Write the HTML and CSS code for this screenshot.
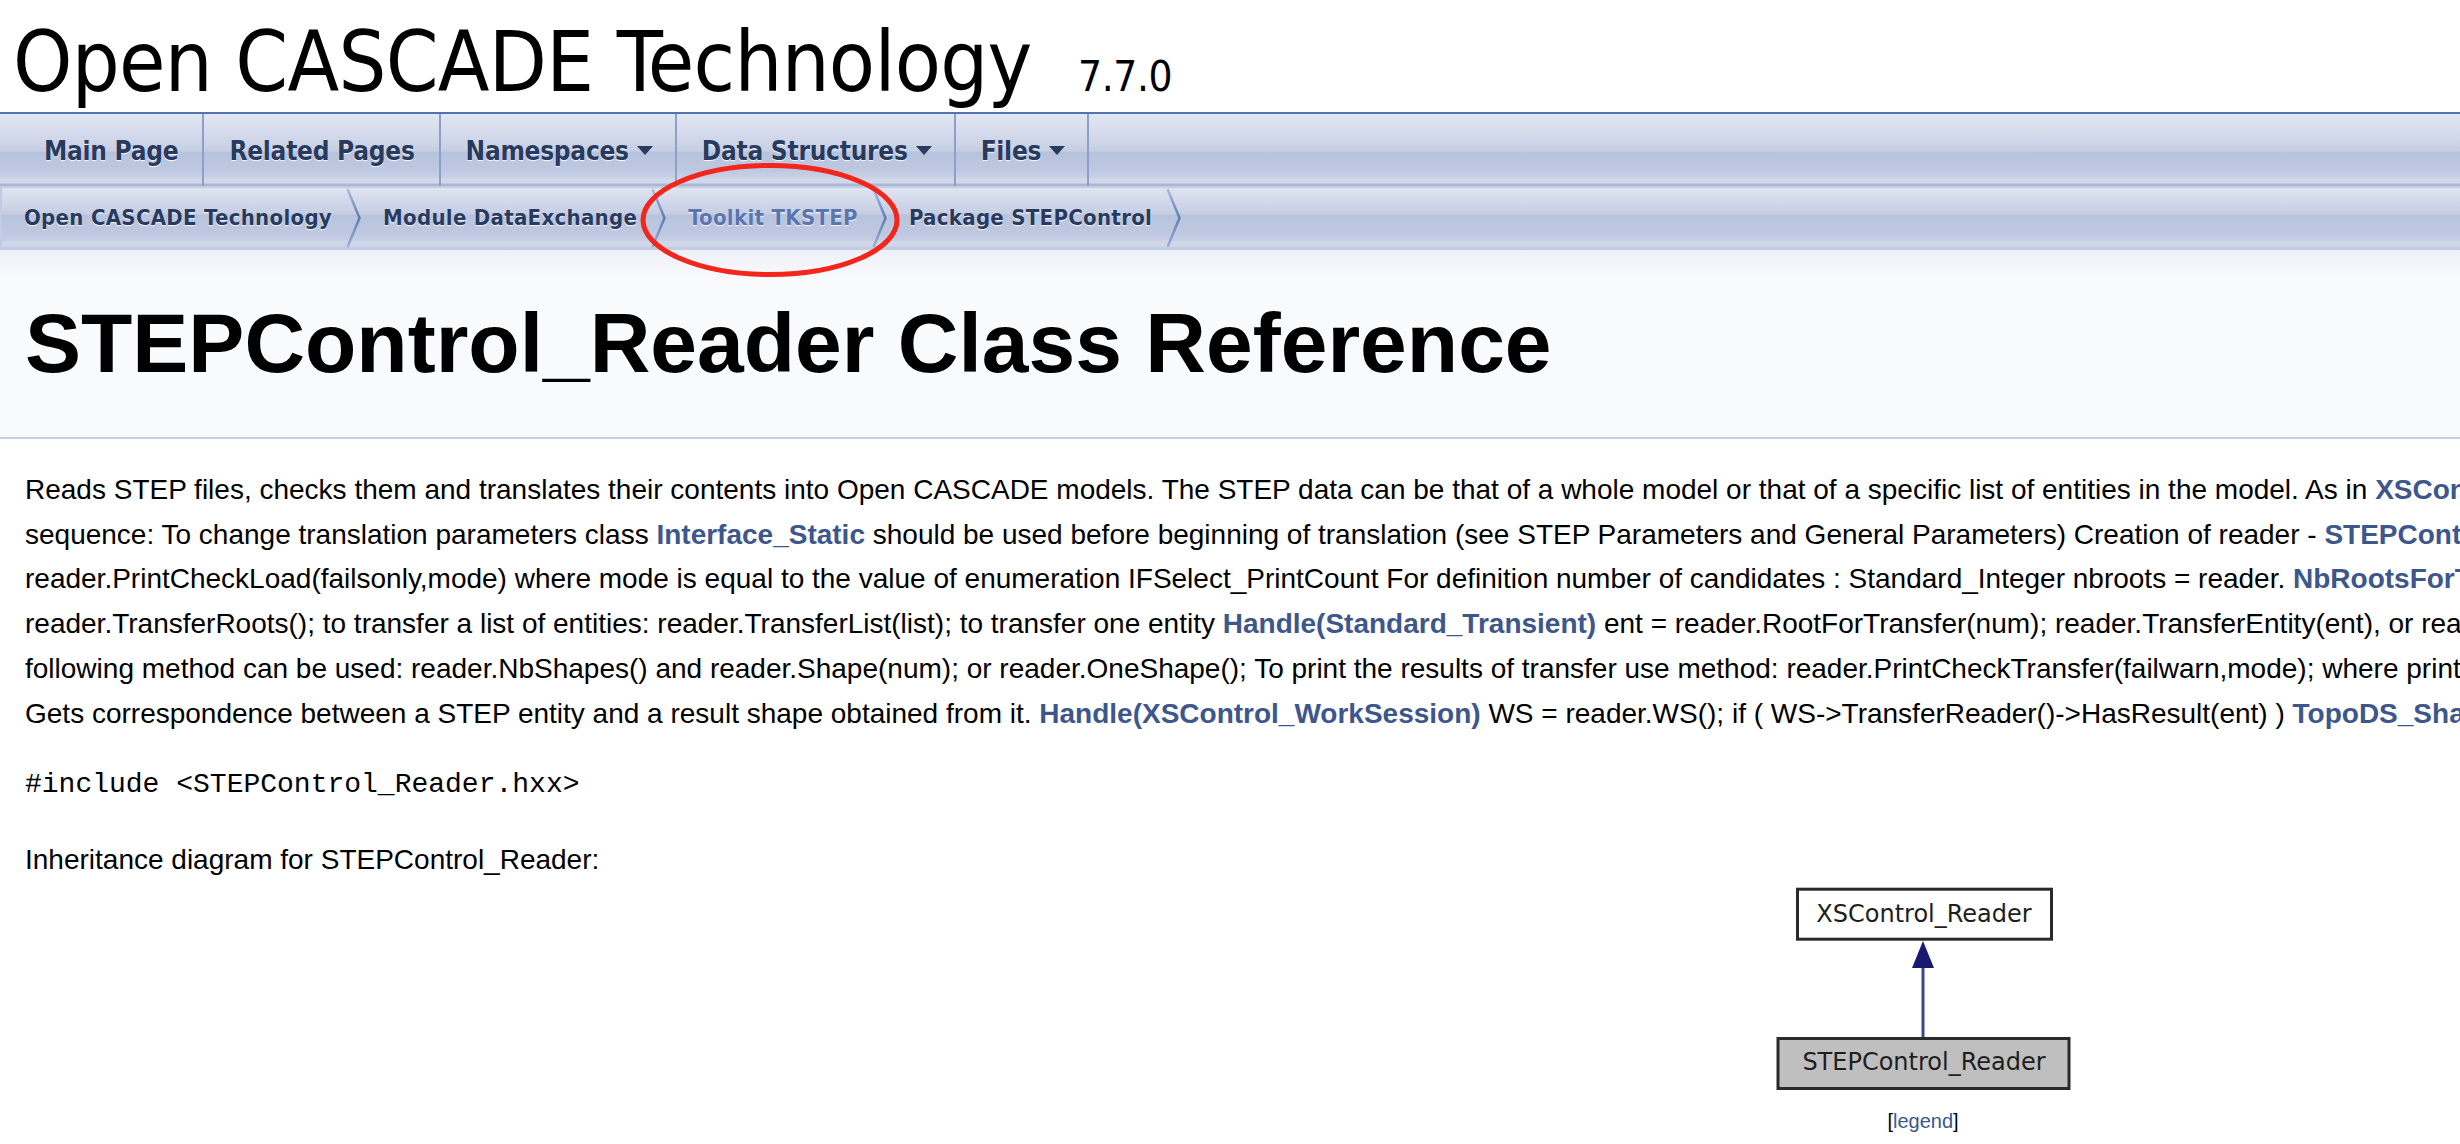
FILE: index.html
```html
<!DOCTYPE html>
<html lang="en">
<head>
<meta charset="utf-8">
<title>Open CASCADE Technology: STEPControl_Reader Class Reference</title>
<link rel="stylesheet" href="styles.css">
</head>
<body>
<div class="page">
  <div class="titlearea">
    <div class="projectname">Open CASCADE Technology &nbsp;<span class="projectnumber">7.7.0</span></div>
  </div>

  <nav class="mainmenu">
    <ul class="menu">
      <li><a href="#">Main Page</a></li>
      <li><a href="#">Related Pages</a></li>
      <li><a href="#" class="has-sub">Namespaces<span class="sub-arrow"></span></a></li>
      <li><a href="#" class="has-sub">Data Structures<span class="sub-arrow"></span></a></li>
      <li><a href="#" class="has-sub">Files<span class="sub-arrow"></span></a></li>
    </ul>
  </nav>

  <div class="navpath">
    <ul>
      <li><a href="#">Open CASCADE Technology</a><svg class="sep" viewBox="0 0 15 60"><defs><linearGradient id="bcg" x1="0" y1="0" x2="0" y2="1"><stop offset="0" stop-color="#AFBEDD"/><stop offset="0.5" stop-color="#5F7BB7"/><stop offset="1" stop-color="#9FB0D6"/></linearGradient></defs><polyline points="1.5,1 13.5,30 1.5,59" fill="none" stroke="url(#bcg)" stroke-width="2.5"/></svg></li>
      <li><a href="#">Module DataExchange</a><svg class="sep" viewBox="0 0 15 60"><polyline points="1.5,1 13.5,30 1.5,59" fill="none" stroke="url(#bcg)" stroke-width="2.5"/></svg></li>
      <li><a href="#" class="hover">Toolkit TKSTEP</a><svg class="sep" viewBox="0 0 15 60"><polyline points="1.5,1 13.5,30 1.5,59" fill="none" stroke="url(#bcg)" stroke-width="2.5"/></svg></li>
      <li><a href="#">Package STEPControl</a><svg class="sep" viewBox="0 0 15 60"><polyline points="1.5,1 13.5,30 1.5,59" fill="none" stroke="url(#bcg)" stroke-width="2.5"/></svg></li>
    </ul>
  </div>

  <div class="header">
    <div class="title">STEPControl_Reader Class Reference</div>
  </div>

  <div class="contents">
    <p class="desc">Reads STEP files, checks them and translates their contents into Open CASCADE models. The STEP data can be that of a whole model or that of a specific list of entities in the model. As in <a class="el" href="#">XSControl_Reader</a>, you specify the list using a selection. For the translation of iges files it is possible to use next<br>sequence: To change translation parameters class <a class="el" href="#">Interface_Static</a> should be used before beginning of translation (see STEP Parameters and General Parameters) Creation of reader - <a class="el" href="#">STEPControl_Reader</a> reader; To load s file in a model use method reader.ReadFile("filename.stp") To print load results<br>reader.PrintCheckLoad(failsonly,mode) where mode is equal to the value of enumeration IFSelect_PrintCount For definition number of candidates : Standard_Integer nbroots = reader. <a class="el" href="#">NbRootsForTransfer()</a>; To transfer entities from a model the following methods can be used: for the whole model -<br>reader.TransferRoots(); to transfer a list of entities: reader.TransferList(list); to transfer one entity <a class="el" href="#">Handle(Standard_Transient)</a> ent = reader.RootForTransfer(num); reader.TransferEntity(ent), or reader.TransferOneRoot(num), or reader.TransferOne(num), or reader.TransferRoot(num) To obtain the result the<br>following method can be used: reader.NbShapes() and reader.Shape(num); or reader.OneShape(); To print the results of transfer use method: reader.PrintCheckTransfer(failwarn,mode); where printfail is equal to the value of enumeration IFSelect_PrintFail, mode see above; or reader.PrintStatsTransfer();<br>Gets correspondence between a STEP entity and a result shape obtained from it. <a class="el" href="#">Handle(XSControl_WorkSession)</a> WS = reader.WS(); if ( WS-&gt;TransferReader()-&gt;HasResult(ent) ) <a class="el" href="#">TopoDS_Shape</a> shape = WS-&gt;TransferReader()-&gt;ShapeResult(ent);</p>

    <p class="include"><code>#include &lt;STEPControl_Reader.hxx&gt;</code></p>

    <p class="inh">Inheritance diagram for STEPControl_Reader:</p>

    <div class="diagram">
      <svg class="graph" width="300" height="206" viewBox="0 0 300 206">
        <rect x="24.5" y="5.2" width="254" height="50" fill="#ffffff" stroke="#2a2a2a" stroke-width="3"/>
        <text x="151" y="37.7" text-anchor="middle" class="node-label">XSControl_Reader</text>
        <line x1="150" y1="153" x2="150" y2="82" stroke="#44448c" stroke-width="3"/>
        <polygon points="150,57 139,84 161,84" fill="#191970"/>
        <rect x="5" y="154.5" width="291" height="50" fill="#bfbfbf" stroke="#2a2a2a" stroke-width="3"/>
        <text x="151" y="186" text-anchor="middle" class="node-label">STEPControl_Reader</text>
      </svg>
    </div>
    <div class="legend">[<a href="#">legend</a>]</div>
  </div>

  <svg class="annotation" width="262" height="118" viewBox="0 0 262 118">
    <ellipse cx="130" cy="58" rx="127" ry="54.5" fill="none" stroke="#f2261b" stroke-width="5"/>
  </svg>
</div>
</body>
</html>
```

FILE: styles.css
```css
html {
  overflow: hidden;
  background: #ffffff;
}

body {
  margin: 0;
  width: 3840px;
  font-family: "Liberation Sans", Arial, sans-serif;
  font-size: 28px;
  color: #000000;
}

.page {
  position: relative;
}

/* ---------- title area ---------- */
.titlearea {
  border-bottom: 2px solid #5373B4;
  box-sizing: border-box;
  height: 114px;
}

.projectname {
  font-family: "DejaVu Sans Condensed", "DejaVu Sans", sans-serif;
  font-stretch: condensed;
  font-size: 84px;
  line-height: 1;
  letter-spacing: -0.7px;
  padding: 20px 0 0 13px;
  white-space: nowrap;
}

.projectnumber {
  font-size: 42px;
  letter-spacing: -0.4px;
}

/* ---------- main menu ---------- */
.mainmenu {
  height: 72px;
  background: linear-gradient(to bottom,
    #E2E7F3 0px, #C7CFE4 37px, #B7C3DD 38px, #BDC8E0 55px,
    #C8D0E5 63px, #D1D8EA 65px, #D1D8EA 69px, #ABB7D3 70px, #ABB7D3 72px);
}

.menu {
  display: flex;
  list-style: none;
  margin: 0;
  padding: 0 0 0 19px;
  height: 72px;
}

.menu a {
  display: block;
  height: 72px;
  line-height: 74px;
  padding: 0 24px 0 25px;
  border-right: 2px solid #8DA0CC;
  font-family: "DejaVu Sans Condensed", "DejaVu Sans", sans-serif;
  font-stretch: condensed;
  font-weight: bold;
  font-size: 26px;
  letter-spacing: -0.25px;
  color: #283A5D;
  text-decoration: none;
  text-shadow: 0 1px 1px rgba(255, 255, 255, 0.9);
  white-space: nowrap;
}

.menu a.has-sub {
  padding-right: 22px;
}

.sub-arrow {
  display: inline-block;
  width: 0;
  height: 0;
  margin-left: 8px;
  border-left: 8px solid transparent;
  border-right: 8px solid transparent;
  border-top: 9px solid #283A5D;
  vertical-align: 5px;
}

/* ---------- breadcrumb ---------- */
.navpath {
  border: 2px solid #C2CDE4;
  height: 60px;
  background: linear-gradient(to bottom,
    #DFE4F1 0px, #C6CEE4 26px, #B8C4DE 27px, #BEC8E0 45px,
    #C6CEE4 52px, #D0D7E8 54px, #D0D7E8 58px, #BFC9E0 60px);
}

.navpath ul {
  display: flex;
  list-style: none;
  margin: 0;
  padding: 0;
  height: 60px;
}

.navpath li {
  display: flex;
  padding-left: 22px;
}

.navpath a {
  display: block;
  font-family: "DejaVu Sans Condensed", "DejaVu Sans", sans-serif;
  font-stretch: condensed;
  font-weight: bold;
  font-size: 22px;
  letter-spacing: 0.3px;
  line-height: 60px;
  color: #283A5D;
  text-decoration: none;
  text-shadow: 0 1px 1px rgba(255, 255, 255, 0.9);
  white-space: nowrap;
}

.navpath a.hover {
  color: #5B75AF;
}

.navpath .sep {
  width: 15px;
  height: 60px;
  margin-left: 14px;
}

/* ---------- header ---------- */
.header {
  background: linear-gradient(to bottom, #EDF0F7 0px, #F9FAFC 30px) #F9FAFC;
  border-bottom: 2px solid #C4CFE5;
  padding: 43px 0 43px 25px;
}

.title {
  font-family: "Liberation Sans", Arial, sans-serif;
  font-weight: bold;
  font-size: 84px;
  line-height: 1.2;
  white-space: nowrap;
}

/* ---------- contents ---------- */
.contents {
  margin-left: 25px;
  width: 3796px;
}

.contents p {
  margin: 0;
  line-height: 1.6;
}

.desc {
  margin-top: 29px !important;
  white-space: nowrap;
}

a.el {
  color: #3D578C;
  font-weight: bold;
  text-decoration: none;
}

.include {
  margin-top: 24px !important;
}

.include code {
  font-family: "Liberation Mono", "Courier New", monospace;
  font-size: 28px;
}

.inh {
  margin-top: 31px !important;
}

.diagram {
  text-align: center;
  margin-top: 1px;
  line-height: 0;
}

.graph {
  display: inline-block;
}

.node-label {
  font-family: "DejaVu Sans", sans-serif;
  font-size: 24px;
  fill: #1e1e1e;
}

.legend {
  text-align: center;
  font-size: 20px;
  line-height: 32px;
  margin-top: 15px;
}

.legend a {
  color: #3D578C;
  text-decoration: none;
}

/* ---------- annotation ---------- */
.annotation {
  position: absolute;
  left: 640px;
  top: 162px;
  overflow: visible;
}
```
